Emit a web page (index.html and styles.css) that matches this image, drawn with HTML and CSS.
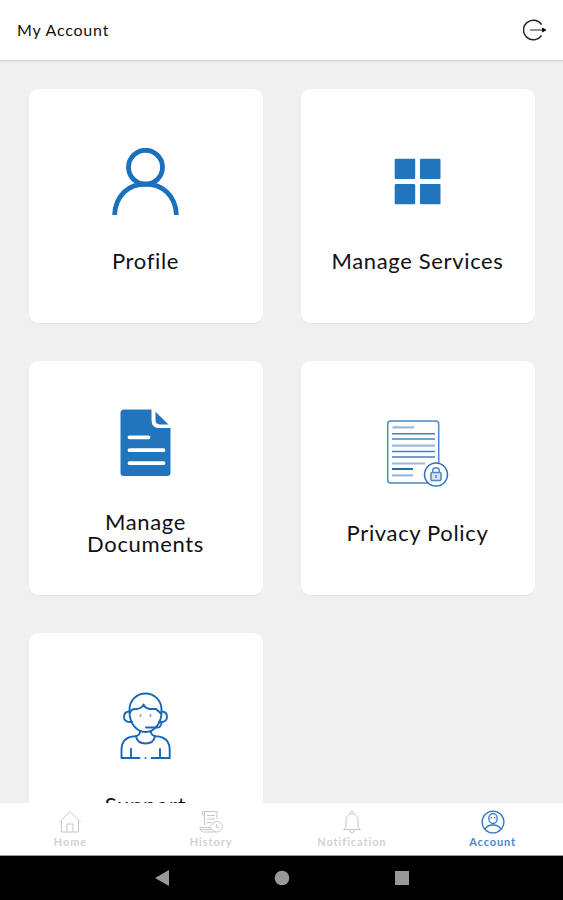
FILE: index.html
```html
<!DOCTYPE html>
<html lang="en">
<head>
    <meta charset="UTF-8">
    <meta name="viewport" content="width=device-width, initial-scale=1.0">
    <title>My Account</title>
    <link rel="stylesheet" href="styles.css">
</head>
<body>
    <header class="header">
        <h1>My Account</h1>
        <button class="logout" aria-label="Log out">
            <svg width="24" height="24" viewBox="0 0 24 24">
                <path d="M18.5 6.6A9.8 9.8 0 1 0 18.5 17.4" fill="none" stroke="#222" stroke-width="1.5"/>
                <path d="M7 12H20" stroke="#555" stroke-width="1.3"/>
                <path d="M19.500 10.200L22.800 12L19.500 13.800Z" fill="#000" stroke="#000"/>
            </svg>
        </button>
    </header>

    <main class="cards">
        <a class="card">
            <svg class="card-icon" viewBox="0 0 67 67" fill="none" stroke="#1b70bd" stroke-width="4.8">
                <circle cx="33.5" cy="19.3" r="17"/>
                <path d="M2.6 67C3.5 47 17 36 33.5 36S63.5 47 64.4 67"/>
            </svg>
            <span class="card-label">Profile</span>
        </a>
        <a class="card">
            <svg class="card-icon" viewBox="0 0 67 67" fill="#2274bc">
                <rect x="10.7" y="10.7" width="20.5" height="20.3" rx="1"/>
                <rect x="36" y="10.7" width="20.5" height="20.3" rx="1"/>
                <rect x="10.7" y="36" width="20.5" height="20.3" rx="1"/>
                <rect x="36" y="36" width="20.5" height="20.3" rx="1"/>
            </svg>
            <span class="card-label">Manage Services</span>
        </a>
        <a class="card">
            <svg class="card-icon" viewBox="0 0 67 67" fill="#2274bc">
                <path d="M12 .5H39.5V11Q39.5 19 47 19H58.5V63.500Q58.5 67 55 67H12Q8.5 67 8.5 63.500V4Q8.5 .5 12 .5Z"/>
                <path d="M43.5 2.8L56.5 15.4H48Q43.5 15.4 43.5 11Z"/>
                <path d="M17.5 28.3H36.5M17.5 41.2H51.5M17.5 54.2H51.5" stroke="#fff" stroke-width="3.8" stroke-linecap="round"/>
            </svg>
            <span class="card-label">Manage<br>Documents</span>
        </a>
        <a class="card">
            <svg class="card-icon" viewBox="0 0 67 67" fill="none" stroke="#4d87c6" stroke-width="1.5">
                <rect x="3.7" y="1" width="51" height="62" rx="3"/>
                <path d="M8.5 7.3H30M8 25.7H51M8 43.5H41M8 55.3H29" stroke="#9eb9df" stroke-width="2.2"/>
                <path d="M8 13.8H51M8 19H51M8 31.5H51M8 37H51" stroke="#4b7fba" stroke-width="1.6"/>
                <path d="M8 49H29" stroke="#206eb5" stroke-width="2"/>
                <circle cx="52" cy="54.6" r="11.500" fill="#fff" stroke="#2d73bb"/>
                <rect x="47" y="52.5" width="10" height="8" rx="1" fill="#d6e3f3"/>
                <path d="M48.7 52.5V51a3.3 3.3 0 0 1 6.6 0v1.5M52 55v3"/>
            </svg>
            <span class="card-label">Privacy Policy</span>
        </a>
        <a class="card">
            <svg class="card-icon" viewBox="0 0 67 67" fill="none" stroke="#1768b7" stroke-width="1.9" stroke-linecap="round" stroke-linejoin="round">
                <path d="M17.500 20V17.500A16 16 0 0 1 49.500 17.500V20C49.500 31 42.500 40 33.500 40S17.500 31 17.500 20Z"/>
                <path d="M18 21Q19 16.500 24.500 17Q30 16.500 31.500 12.500Q33.500 17 39 17H44L49 21.500"/>
                <path d="M17.500 19.500Q12 19.500 12 25T20 30M49.500 19.500Q55 19.500 55 25T47 30"/>
                <path d="M34 35.500H45.500Q49 35.500 49.500 31"/>
                <path d="M28.500 22.800v1.500M38.500 22.800v1.500" stroke="#8db3d9"/>
                <path d="M28.300 39Q28 43.700 23 44.200Q9.500 45 9.500 58V66H27.500M38.700 39Q39 43.700 44 44.200Q57.700 45 57.700 58V66H39.500"/>
                <path d="M24 44.500Q25.500 51.500 33.500 51.500T43 44.500M19 57v9M48 57v9M33.500 66v.1"/>
            </svg>
            <span class="card-label">Support</span>
        </a>
    </main>

    <nav class="tabs">
        <a class="tab">
            <svg width="24" height="24" viewBox="0 0 24 24">
                <path d="M1.500 12L12 1.500L22.500 12M3.500 10.500V22H20.500V10.500M9 22V14H15V22"/>
            </svg>
            <span>Home</span>
        </a>
        <a class="tab">
            <svg width="24" height="24" viewBox="0 0 24 24">
                <path d="M18 9V1.500H3.500V5H5.500V15M5.500 1.500V5M8 5.500H16M8 9H16M8 12.500H12M11 17.500H1Q1 22 5 22H17M1.500 19.500H12"/>
                <path d="M10.500 17Q13 11.500 17.500 11.500T24 17Q21.500 22 17.500 22T10.500 17Z"/>
                <path d="M17.500 14v3.500h3"/>
            </svg>
            <span>History</span>
        </a>
        <a class="tab">
            <svg width="24" height="24" viewBox="0 0 24 24">
                <path d="M10.500 3.500V2.500a1.500 1.500 0 0 1 3 0v1M6 17V9.500a6 6 0 0 1 12 0V17L20.500 19.500H3.500ZM9.500 20Q10 23 12 23T14.500 20"/>
            </svg>
            <span>Notification</span>
        </a>
        <a class="tab active">
            <svg width="24" height="24" viewBox="0 0 24 24">
                <circle cx="12" cy="12" r="10.900"/>
                <ellipse cx="12" cy="8.500" rx="4.200" ry="5"/>
                <path d="M4 19.500Q6 15 12 15T20 19.500M10.200 7v1.500M13.800 7v1.500"/>
            </svg>
            <span>Account</span>
        </a>
    </nav>

    <div class="system-bar">
        <svg width="16" height="18" viewBox="0 0 16 18"><path d="M1 9L15 1V17Z"/></svg>
        <svg width="16" height="18" viewBox="0 0 16 18"><circle cx="8" cy="9" r="7.300"/></svg>
        <svg width="16" height="18" viewBox="0 0 16 18"><rect x="1" y="2" width="14" height="14"/></svg>
    </div>
</body>
</html>
```
FILE: styles.css
```css
* {
    box-sizing: border-box;
}

body {
    display: flex;
    flex-direction: column;
    height: 100vh;
    margin: 0;
    overflow: hidden;
    background-color: #f0f0f0;
    color: #111;
    font-family: Lato, "Liberation Sans", sans-serif;
}

.header {
    display: flex;
    flex: none;
    justify-content: space-between;
    align-items: center;
    height: 61px;
    padding: 0 16px 0 17px;
    background-color: #fff;
    border-bottom: 1px solid #d8d8d8;
    box-shadow: 0 1px 1px rgba(0, 0, 0, 0.06);
}

.header h1 {
    margin: 0 0 2px;
    font-size: 16px;
    font-weight: 400;
    letter-spacing: 0.8px;
}

.logout {
    display: flex;
    padding: 0;
    border: none;
    background: none;
    cursor: pointer;
}

.cards {
    display: grid;
    flex: 1;
    min-height: 0;
    grid-template-columns: 234px 234px;
    grid-auto-rows: 234px;
    gap: 38px;
    padding: 27.5px 28.5px 0;
    overflow: hidden;
}

.card {
    display: flex;
    flex-direction: column;
    align-items: center;
    justify-content: center;
    padding-top: 9px;
    border-radius: 9px;
    background-color: #fff;
    box-shadow: 0 1px 1px rgba(0, 0, 0, 0.06);
}

.card-icon {
    width: 67px;
    height: 67px;
    margin-bottom: 35px;
}

.card-label {
    font-size: 22px;
    line-height: 22px;
    letter-spacing: 0.65px;
    text-align: center;
}

.tabs {
    display: grid;
    flex: none;
    grid-template-columns: repeat(4, 1fr);
    height: 53px;
    background-color: #fff;
    border-bottom: 1px solid #999;
}

.tab {
    display: flex;
    flex-direction: column;
    align-items: center;
    padding-top: 7px;
    color: #d2d2d2;
    font-size: 11px;
    line-height: 14px;
    font-weight: 700;
    letter-spacing: 0.9px;
}

.tab svg {
    margin-bottom: 1px;
    fill: none;
    stroke: #c8c8c8;
    stroke-width: 1;
}

.tab.active {
    color: #4a86c8;
}

.tab.active svg {
    stroke: #3478c0;
    stroke-width: 1.3;
}

.system-bar {
    display: flex;
    flex: none;
    justify-content: center;
    align-items: center;
    gap: 104px;
    height: 44px;
    background-color: #000;
}

.system-bar svg {
    fill: #999;
}
```
